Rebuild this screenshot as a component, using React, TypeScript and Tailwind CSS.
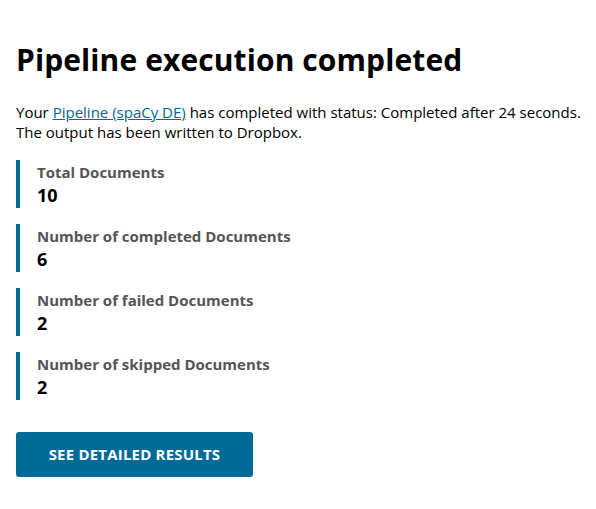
import React from "react";

const stats = [
  { label: "Total Documents", value: "10" },
  { label: "Number of completed Documents", value: "6" },
  { label: "Number of failed Documents", value: "2" },
  { label: "Number of skipped Documents", value: "2" },
];

export default function App() {
  return (
    <div
      className="bg-white w-[596px] h-[509px] px-4 pt-[40px] text-black"
      style={{ fontFamily: '"Open Sans", "Noto Sans", sans-serif' }}
    >
      <h1 className="text-[30px] leading-[40px] font-bold tracking-[0.1px]">
        Pipeline execution completed
      </h1>
      <p className="mt-[22px] text-[15px] leading-[20px] whitespace-nowrap">
        Your{" "}
        <a href="#" className="text-[#00698f] underline">
          Pipeline (spaCy DE)
        </a>{" "}
        has completed with status: Completed after 24 seconds.
        <br />
        The output has been written to Dropbox.
      </p>
      <div className="mt-[18px] flex flex-col gap-4">
        {stats.map((s) => (
          <div
            key={s.label}
            className="border-l-[4px] border-[#00698f] pl-[17px] h-[48px] flex flex-col justify-center"
          >
            <div className="text-[15px] leading-[22px] font-bold text-[#555555]">
              {s.label}
            </div>
            <div className="text-[18px] leading-[24px] font-bold">{s.value}</div>
          </div>
        ))}
      </div>
      <button className="mt-[32px] w-[237px] h-[45px] rounded-[3px] bg-[#006b96] text-white text-[15px] font-bold uppercase tracking-[0.2px]">
        See detailed results
      </button>
    </div>
  );
}
